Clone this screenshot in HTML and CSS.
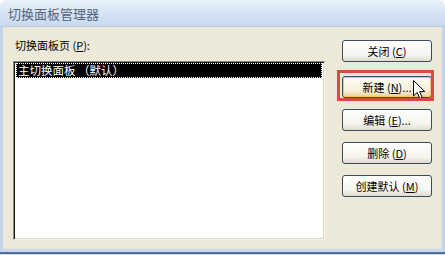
FILE: index.html
```html
<!DOCTYPE html>
<html lang="zh-CN">
<head>
    <meta charset="UTF-8">
    <title>切换面板管理器</title>
    <link rel="stylesheet" href="styles.css">
</head>
<body>

    <div class="window">
        <div class="titlebar">切换面板管理器</div>
        <div class="client">
            <div class="pages">
                <div class="label">切换面板页 (<u>P</u>):</div>
                <div class="listbox">
                    <div class="item selected">主切换面板 （默认）</div>
                </div>
            </div>
            <div class="buttons">
                <button class="btn">关闭 (<u>C</u>)</button>
                <div class="highlight">
                    <button class="btn">新建 (<u>N</u>)...</button>
                    <svg class="cursor" width="13" height="20" viewBox="0 0 13 20">
                        <path d="M0.5 0.5 L0.5 16 L4.2 12.4 L6.8 18.6 L9.2 17.6 L6.7 11.6 L11.8 11.6 Z" fill="#fff" stroke="#000" stroke-width="1"/>
                    </svg>
                </div>
                <button class="btn">编辑 (<u>E</u>)...</button>
                <button class="btn">删除 (<u>D</u>)</button>
                <button class="btn">创建默认 (<u>M</u>)</button>
            </div>
        </div>
    </div>

</body>
</html>
```

FILE: styles.css
```css
/* Core styles */
body {
    margin: 0;
    background: #fff;
    font-family: "Noto Sans CJK SC", "DejaVu Sans", sans-serif;
}

.window {
    width: 445px;
    height: 255px;
    display: flex;
    flex-direction: column;
}

.titlebar {
    height: 27px;
    line-height: 27px;
    padding-left: 8px;
    font-size: 13px;
    color: #56657c;
    background: linear-gradient(to bottom, #e9f1fa, #d3e1f2 60%, #c9d9ee);
    border-radius: 6px 6px 0 0;
    border-bottom: 1px solid #b9cbe2;
    box-sizing: border-box;
}

.client {
    flex: 1;
    display: flex;
    background: #ece9d8;
    border-left: 3px solid #c3d4ea;
    border-right: 3px solid #c3d4ea;
    border-bottom: 6px solid #c9d9ee;
    box-shadow: inset 0 -1px 0 #e6e3d2;
    position: relative;
}

.client::after {
    content: "";
    position: absolute;
    left: -3px;
    right: -3px;
    bottom: -5px;
    height: 2px;
    background: #4f6f9f;
}

.pages {
    margin-left: 10px;
    width: 312px;
    padding-top: 11px;
}

.label {
    font-size: 11px;
    line-height: 15px;
    height: 15px;
    padding-left: 2px;
    color: #000;
    margin-bottom: 8px;
}

.listbox {
    height: 179px;
    background: #fffffd;
    border-style: solid;
    border-width: 1px;
    border-color: #8a8a84 #f4f2e8 #f4f2e8 #8a8a84;
    box-shadow: inset 1px 1px 0 #1a1a1a, inset -1px -1px 0 #dcd9cb;
    box-sizing: border-box;
    padding: 1px 2px 0 2px;
}

.item {
    font-size: 11.5px;
    line-height: 14px;
    height: 15px;
    padding-left: 2px;
    box-sizing: border-box;
}

.selected {
    background: #000;
    color: #fff;
    outline: 1px dotted #fff;
    outline-offset: -1px;
}

.buttons {
    margin-left: 17px;
    padding-top: 13px;
    display: flex;
    flex-direction: column;
    gap: 11px;
    width: 90px;
}

.btn {
    width: 90px;
    height: 22px;
    padding: 0;
    font-family: inherit;
    font-size: 11px;
    color: #000;
    background: linear-gradient(to bottom, #ffffff, #f5f4ee 70%, #dedbce);
    border: 1px solid #3c4a5e;
    border-radius: 3px;
}

.btn u {
    text-decoration: underline;
}

.highlight {
    position: relative;
}

.highlight .btn {
    background: linear-gradient(to bottom, #fffdf4, #f6efd8 70%, #e8cf97);
    box-shadow: inset 0 0 0 1px #f6c66c;
}

.highlight::after {
    content: "";
    position: absolute;
    left: -5px;
    top: -3px;
    right: -2px;
    bottom: -3px;
    border: 3px solid #d84a44;
    pointer-events: none;
}

.cursor {
    position: absolute;
    left: 71px;
    top: 7px;
}
```
